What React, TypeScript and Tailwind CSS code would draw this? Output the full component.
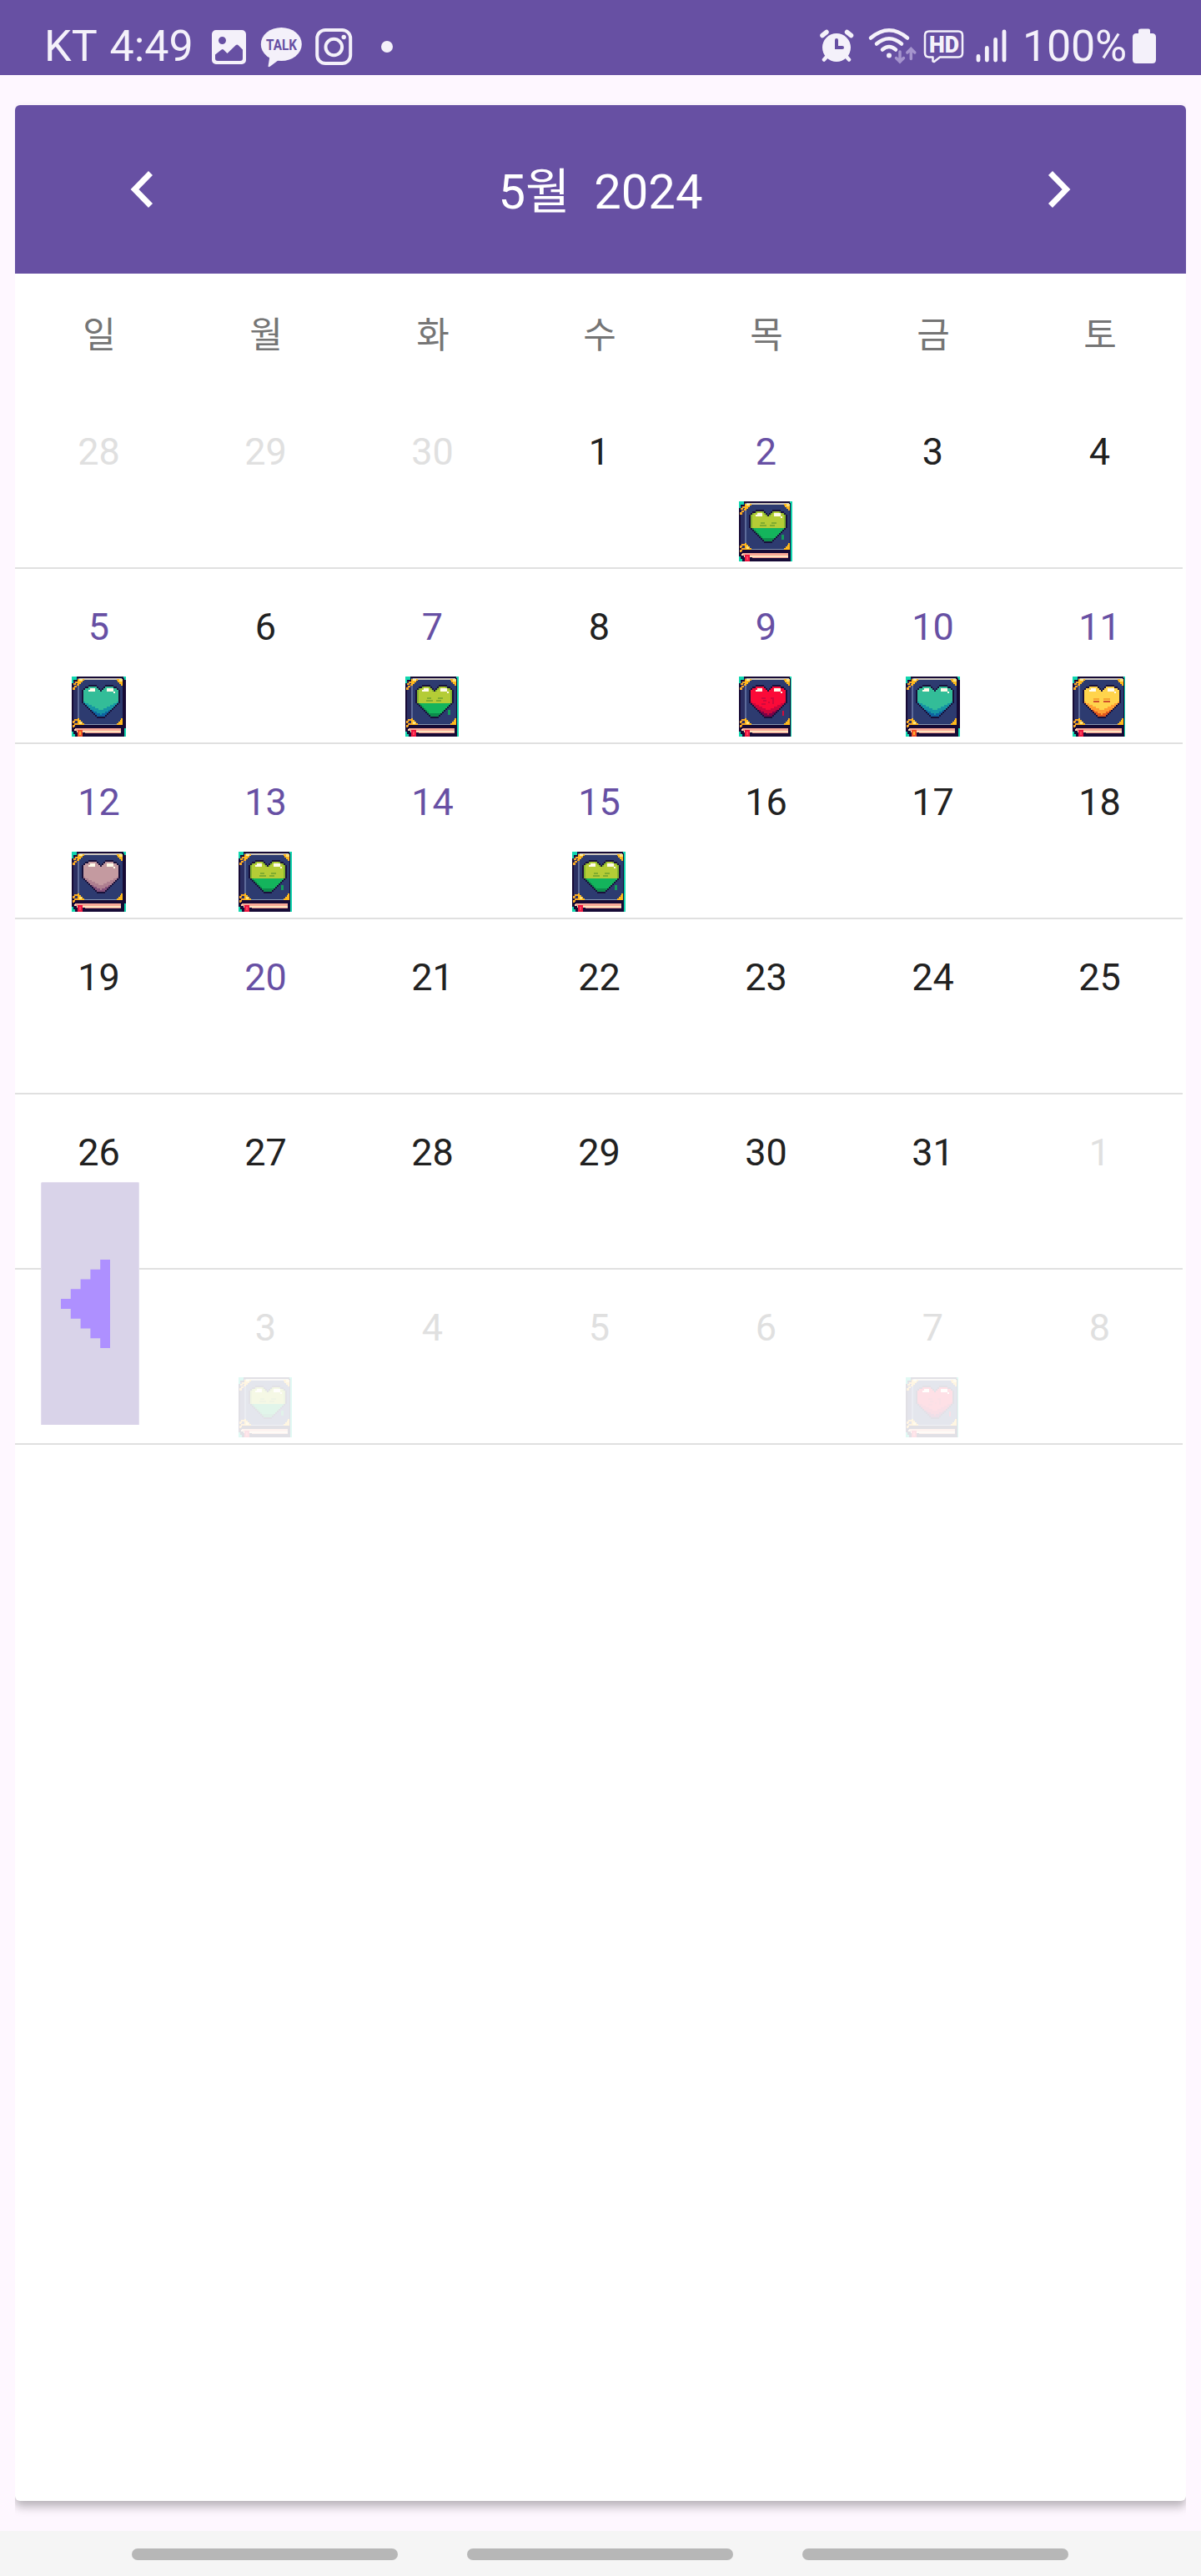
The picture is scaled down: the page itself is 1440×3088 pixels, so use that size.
type Mood = "green" | "teal" | "red" | "gold" | "mauve";

type Day = { n: number; tone?: "dim" | "accent"; mood?: Mood };

const WEEKDAYS = ["일", "월", "화", "수", "목", "금", "토"];

const dim = (n: number, mood?: Mood): Day => ({ n, tone: "dim", mood });
const hot = (n: number, mood?: Mood): Day => ({ n, tone: "accent", mood });
const day = (n: number): Day => ({ n });

const WEEKS: Day[][] = [
  [dim(28), dim(29), dim(30), day(1), hot(2, "green"), day(3), day(4)],
  [hot(5, "teal"), day(6), hot(7, "green"), day(8), hot(9, "red"), hot(10, "teal"), hot(11, "gold")],
  [hot(12, "mauve"), hot(13, "green"), hot(14), hot(15, "green"), day(16), day(17), day(18)],
  [day(19), hot(20), day(21), day(22), day(23), day(24), day(25)],
  [day(26), day(27), day(28), day(29), day(30), day(31), dim(1)],
  [dim(2), dim(3, "green"), dim(4), dim(5), dim(6), dim(7, "red"), dim(8)],
];

// Spans of filled cells for each row of the pixel heart, 23 cells wide.
const HEART: number[][][] = [
  [[4, 8], [14, 18]],
  [[2, 9], [13, 20]],
  [[1, 10], [12, 21]],
  [[0, 22]], [[0, 22]], [[0, 22]], [[0, 22]], [[0, 22]], [[0, 22]], [[0, 22]], [[0, 22]],
  [[1, 21]], [[2, 20]], [[3, 19]], [[4, 18]], [[5, 17]], [[6, 16]], [[7, 15]], [[8, 14]], [[9, 13]],
];

const filled = (x: number, y: number) =>
  y >= 0 && y < HEART.length && HEART[y].some(([a, b]) => x >= a && x <= b);

const inner = (x: number, y: number) =>
  filled(x, y) && filled(x - 1, y) && filled(x + 1, y) && filled(x, y - 1) && filled(x, y + 1);

const HEART_COLORS: Record<Mood, { top: string; mid: string; low: string; edge: string }> = {
  green: { top: "#b4cc36", mid: "#14b45c", low: "#0d8a4c", edge: "#82b32e" },
  teal: { top: "#33bd98", mid: "#1694a3", low: "#0f62a0", edge: "#1e9a9c" },
  red: { top: "#fb0a38", mid: "#c9063c", low: "#7a0348", edge: "#d3063a" },
  gold: { top: "#ffd44c", mid: "#ff9e33", low: "#e0581f", edge: "#ffb43a" },
  mauve: { top: "#c49aa0", mid: "#ae7f90", low: "#84507a", edge: "#ab8291" },
};

function heartColor(mood: Mood, x: number, y: number) {
  const c = HEART_COLORS[mood];
  if ((y === 2 || y === 3) && ((x >= 4 + (3 - y) && x <= 7) || (x >= 15 && x <= 18))) return "#fffbea";
  if (y === 4 && x === 19) return "#fffbea";
  if (mood === "green") {
    if (y >= 11) return y >= 17 || !inner(x - 1, y) ? c.low : c.mid;
    return !inner(x - 1, y) || !inner(x + 1, y) ? c.edge : c.top;
  }
  const depth = y + Math.abs(x - 11) * 0.5;
  if (depth > 17) return c.low;
  if (depth > 14.6) return c.mid;
  return c.top;
}

function Heart({ mood }: { mood: Mood }) {
  const cells = [];
  for (let y = 0; y < HEART.length; y++) {
    for (let x = 0; x < 23; x++) {
      if (filled(x, y)) {
        cells.push(
          <rect key={`${x}-${y}`} x={12 + x * 2} y={10 + y * 2} width="2" height="2" fill={inner(x, y) ? heartColor(mood, x, y) : "#18103a"} />
        );
      }
    }
  }
  return <g>{cells}</g>;
}

function Book({ mood }: { mood: Mood }) {
  const wide = mood === "teal" || mood === "mauve";
  const w = wide ? 63 : 62;
  return (
    <svg width="65" height="72" viewBox="0 0 65 72" shapeRendering="crispEdges" className="block">
      <rect width={wide ? 65 : mood === "green" ? 64 : 63} height="72" fill="#12d6ae" />
      <path d={`M6 0H${w - 1}V2H${w}V62H${w}V72H4V69H2V66H0V8H2V4H6Z`} fill="#160a35" />
      {wide && <path d="M63 4h2v58h-2z" fill="#160a35" />}
      <rect x="8" y="4" width="53" height="54" fill="#2d3b70" />
      <rect x="2" y="6" width="5" height="50" fill="#2b2e61" />
      <rect x="7" y="2" width="2" height="56" fill="#5d6b9a" />
      <rect x="9" y="2" width="51" height="2" fill="#cfc9bf" />
      <rect x="9" y="57" width="51" height="1" fill="#8796b0" />
      <path d="M7 3h8v2h-2v2h-2v2H9v2H7z" fill="#ffb91c" />
      <path d="M9 3h4v2H9z" fill="#fff0a0" />
      <path d="M2 10V8h2V6h3v2H5v2zM1 16v-3h2v-2h3V9h2v2H6v2H4v3z" fill="#f9a825" />
      <path d="M54 3h7v8h-2V9h-2V7h-2V5h-1z" fill="#ffb91c" />
      <path d="M57 3h4v3h-4z" fill="#ffe27a" />
      <path d="M7 50h2v2h2v2h2v2h2v2H7z" fill="#ffb91c" />
      <path d="M9 54h3v3H9z" fill="#ffe27a" />
      <path d="M1 56v-3h2v-2h4v2H4v2H3v1zM1 61v-3h2v-2h5v2H4v2H3v1z" fill="#f9a825" />
      <path d="M61 50v8h-7v-2h2v-2h2v-2h1v-2z" fill="#ffb91c" />
      <rect x="4" y="62" width="55" height="3" fill="#f8a896" />
      <rect x="6" y="65" width="53" height="2" fill="#fde4bf" />
      <rect x="16" y="67" width="43" height="1" fill="#e5938d" />
      <rect x="3" y="63" width="2" height="2" fill="#ffd9b0" />
      <rect x="7" y="64" width="6" height="8" fill={mood === "teal" ? "#f0532a" : "#ec1740"} />
      <rect x="9" y="66" width="2" height="4" fill={mood === "teal" ? "#ffb42e" : "#ff4560"} />
      <Heart mood={mood} />
      {mood === "green" && (
        <>
          <path d="M26 25h5v2h-5zM25 28h8v2h-8zM39 25h6v2h-6zM37 28h6v2h-6z" fill="#7fac30" />
          <path d="M51 40h3v6h-3z" fill="#159a5c" />
        </>
      )}
      {mood === "red" && (
        <>
          <path d="M27 25h5v2h-5zM29 28h4v2h-4zM27 32h5v2h-5zM38 25h4v2h-4zM40 27h2v6h-2zM35 30h2v2h-2z" fill="#cf0a3d" />
          <path d="M52 41h2v6h-2z" fill="#d20b3c" />
        </>
      )}
      {mood === "gold" && (
        <>
          <path d="M25 26h7v2h-7zM37 26h8v2h-8z" fill="#f7a431" />
          <path d="M25 29h7v2h-7zM37 29h8v2h-8z" fill="#d0502c" />
        </>
      )}
    </svg>
  );
}

const INK = "#f4f1fa";

function StatusBar() {
  return (
    <div className="flex h-[90px] items-start justify-between bg-[#6750a3] text-[#f4f1fa]">
      <div className="flex">
        <span className="ml-[53px] mt-[25px] w-[201px] whitespace-pre text-[52px] leading-[61px] [word-spacing:3px]">KT 4:49</span>
        <svg width="220" height="90" viewBox="254 0 220 90">
          <path fillRule="evenodd" fill={INK} d="M259 36h31a5 5 0 0 1 5 5v31a5 5 0 0 1-5 5h-31a5 5 0 0 1-5-5V41a5 5 0 0 1 5-5zM266.500 44a4.500 4.500 0 1 0 0 9a4.500 4.500 0 0 0 0-9zM258 65.500V70q0 3 3 3h27q3 0 3-3V59.500l-5.500-5.500q-1.300-1-2.600 0l-10.400 10l-4.500-4.500q-1.200-1-2.400 0z" />
          <ellipse cx="337.300" cy="53" rx="24.500" ry="20" fill={INK} />
          <path d="M323.500 67L321.500 79.500Q322 81 324 79.500L334 72Z" fill={INK} />
          <text x="337.500" y="59.800" textAnchor="middle" fontSize="17.500" fontWeight="700" fontFamily="Roboto, sans-serif" textLength="37" lengthAdjust="spacingAndGlyphs" fill="#6750a3">TALK</text>
          <rect x="380.200" y="36" width="40" height="40" rx="10" fill="none" stroke={INK} strokeWidth="4" />
          <circle cx="400.300" cy="56.500" r="9.800" fill="none" stroke={INK} strokeWidth="4" />
          <circle cx="412.200" cy="44.500" r="2.700" fill={INK} />
          <circle cx="464" cy="56" r="7" fill={INK} />
        </svg>
      </div>
      <div className="flex">
        <svg width="246" height="90" viewBox="980 0 246 90">
          <g stroke={INK} strokeLinecap="round" fill="none">
            <circle cx="1003" cy="57" r="17" fill={INK} stroke="none" />
            <path d="M986 42.500L991 38.500M1015.500 38.500L1020.500 42.500" strokeWidth="5.500" />
            <path d="M992 67L988 71.500M1014 67L1018 71.500" strokeWidth="4.500" />
            <path d="M1003 48V57H1010" stroke="#6750a3" strokeWidth="4" />
            <path d="M1044 45.500Q1066 27 1088 45.500" strokeWidth="4.500" />
            <path d="M1051 52.500Q1066 40 1081 52.500" strokeWidth="4.500" />
            <path d="M1058 59.500Q1066 52.500 1074 59.500" strokeWidth="4.500" />
            <circle cx="1066" cy="66.500" r="3" fill={INK} stroke="none" />
            <path d="M1079 62V73M1074.500 69.500L1079 74L1083.500 69.500M1092.300 70.500V59M1087.800 63L1092.300 58.500L1096.800 63" stroke="#a594cd" strokeWidth="3.500" />
            <path d="M1114 37.500h35q5 0 5 5v21q0 5-5 5h-22l-7 5.500q-2 0-1.500-2v-3.500h-4.500q-5 0-5-5v-21q0-5 5-5z" strokeWidth="2.500" strokeLinejoin="round" />
            <path d="M1173 67.500V72M1183.300 57.500V72M1193.600 47.500V72M1204 38V72" strokeWidth="4.800" />
          </g>
          <text x="1132" y="62.500" textAnchor="middle" fontSize="28" fontWeight="900" fontFamily="Roboto, sans-serif" textLength="36" lengthAdjust="spacingAndGlyphs" fill={INK}>HD</text>
        </svg>
        <span className="mt-[25px] w-[132px] text-[52px] leading-[61px] tracking-[-0.2px]">100%</span>
        <svg width="82" height="90" viewBox="1358 0 82 90">
          <path d="M1368 34.500h9q2 0 2 2v3.500h2.500q4.500 0 4.500 4.500v27q0 4.500-4.500 4.500h-19q-4.500 0-4.500-4.500v-27q0-4.500 4.500-4.500h2.500v-3.500q0-2 3-2z" fill={INK} />
        </svg>
      </div>
    </div>
  );
}

function DayCell({ d }: { d: Day }) {
  const tone = d.tone === "dim" ? "text-[#e0e0e0]" : d.tone === "accent" ? "text-[#6750a4]" : "text-[#212121]";
  return (
    <div className="flex w-[200px] flex-col items-center pt-[43px]">
      <span className={`pl-[1px] text-[45px] leading-[53px] ${tone}`}>{d.n}</span>
      {d.mood && (
        <div className={`mt-[33px] ${d.tone === "dim" ? "opacity-[0.12]" : ""}`}>
          <Book mood={d.mood} />
        </div>
      )}
    </div>
  );
}

export default function App() {
  return (
    <div className="relative flex h-[3088px] w-[1440px] flex-col bg-[#fef7ff] font-[Roboto,'Noto_Sans_CJK_KR',sans-serif]">
      <StatusBar />
      <div className="mx-[18px] flex-1 overflow-hidden pt-9">
        <div className="h-[2872px] overflow-clip rounded-[6px] bg-white shadow-[0_7px_12px_rgba(0,0,0,0.28)]">
          <div className="flex h-[202px] items-center justify-between bg-[#6750a3] px-[137px] text-white">
            <svg width="30" height="44" viewBox="0 0 30 44" fill="none" stroke="white" strokeWidth="7" className="mb-[1px]">
              <path d="M25.500 2.500L6.500 22L25.500 41.500" />
            </svg>
            <span className="mt-[5px] whitespace-pre text-[58px] leading-[70px]">5월  2024</span>
            <svg width="30" height="44" viewBox="0 0 30 44" fill="none" stroke="white" strokeWidth="7" className="mb-[1px]">
              <path d="M4.500 2.500L23.500 22L4.500 41.500" />
            </svg>
          </div>
          <div className="flex h-[144px] w-[1400px] items-center pt-[4px]">
            {WEEKDAYS.map((w) => (
              <span key={w} className="w-[200px] pl-[2px] text-center text-[43px] leading-[50px] text-[#757575]">{w}</span>
            ))}
          </div>
          {WEEKS.map((week, i) => (
            <div key={i} className="flex h-[210px] w-[1400px] border-b-2 border-[#e0e0e0]">
              {week.map((d, j) => (
                <DayCell key={j} d={d} />
              ))}
            </div>
          ))}
        </div>
      </div>
      <div className="flex h-[54px] items-center justify-center gap-[83px] bg-[#f5f5f5] pr-[1px] pt-[2px]">
        <div className="h-[14px] w-[319px] rounded-full bg-[#b7b7b7]" />
        <div className="h-[14px] w-[319px] rounded-full bg-[#b7b7b7]" />
        <div className="h-[14px] w-[319px] rounded-full bg-[#b7b7b7]" />
      </div>
      <div className="absolute left-[49px] top-[1417px] h-[291px] w-[118px] rounded-t-[2px] border border-b-0 border-[#e3deef] bg-[#d9d3e9]">
        <svg width="60" height="108" viewBox="0 0 5 9" preserveAspectRatio="none" className="ml-[23px] mt-[92px] h-[106px] w-[59px]">
          <path d="M4 0H5V9H4V8H3V7H2V6H1V5H0V4H1V3H2V2H3V1H4Z" fill="#ae90ff" />
        </svg>
      </div>
    </div>
  );
}
